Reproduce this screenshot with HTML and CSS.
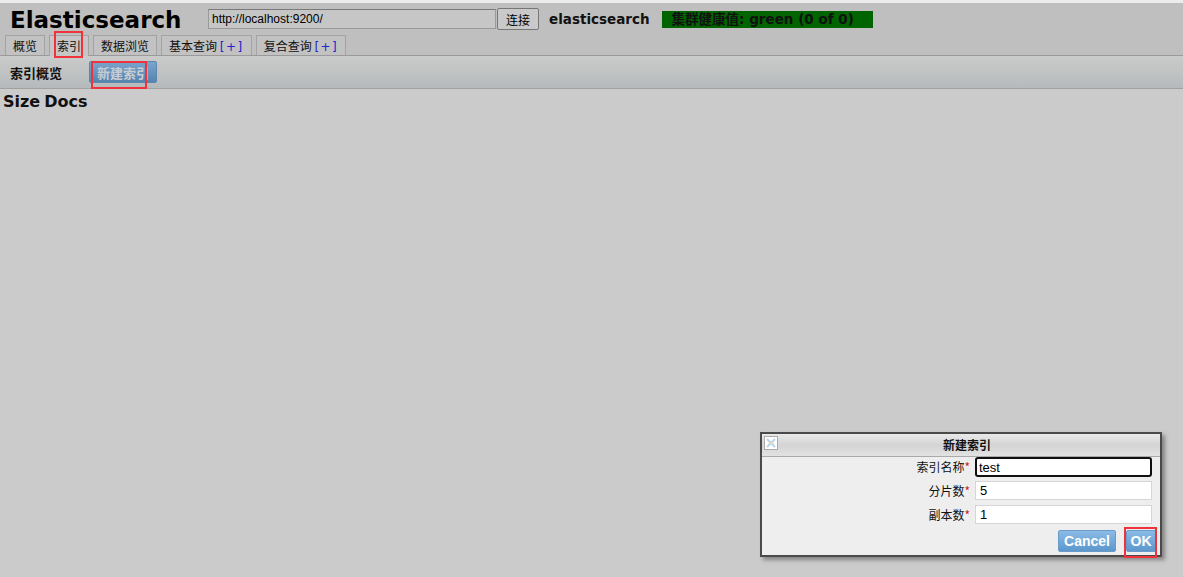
FILE: index.html
```html
<!DOCTYPE html>
<html>
<head>
<meta charset="utf-8">
<link rel="stylesheet" href="styles.css">
</head>
<body>
<div class="header">
  <div class="topbar">
    <h1 class="title">Elasticsearch</h1>
    <input class="url" type="text" value="http://localhost:9200/">
    <button class="connect">连接</button>
    <span class="cluster">elasticsearch</span>
    <span class="health">集群健康值: green (0 of 0)</span>
  </div>
  <div class="tabs">
    <div class="tab">概览</div>
    <div class="tab active">索引</div>
    <div class="tab">数据浏览</div>
    <div class="tab">基本查询 <span class="plus">[+]</span></div>
    <div class="tab">复合查询 <span class="plus">[+]</span></div>
  </div>
</div>
<div class="toolbar">
  <span class="tb-title">索引概览</span>
  <button class="newbtn">新建索引</button>
</div>
<div class="content">
  <div class="stats"><span>Size</span><span>Docs</span></div>
</div>

<div class="dialog">
  <div class="dlg-head">
    <span class="close"><svg width="12" height="12" viewBox="0 0 12 12"><path d="M2 2L10 10M10 2L2 10" stroke="#b9d4ec" stroke-width="2"/><path d="M3 6h6" stroke="#f3e2b0" stroke-width="1"/></svg></span>
    <span class="dlg-title">新建索引</span>
  </div>
  <div class="dlg-body">
    <div class="row"><label>索引名称<i>*</i></label><input class="focus" type="text" value="test"></div>
    <div class="row"><label>分片数<i>*</i></label><input type="text" value="5"></div>
    <div class="row"><label>副本数<i>*</i></label><input type="text" value="1"></div>
    <div class="btns">
      <button class="ui-btn cancel">Cancel</button>
      <button class="ui-btn ok">OK</button>
    </div>
  </div>
</div>

<div class="mark mark-tab"></div>
<div class="mark mark-new"></div>
<div class="mark mark-ok"></div>
</body>
</html>
```

FILE: styles.css
```css
html, body {
  margin: 0;
  padding: 0;
}
body {
  background: #cbcbcb;
  border-top: 3px solid #ececec;
  font-family: "DejaVu Sans", "Noto Sans CJK SC", sans-serif;
  width: 1183px;
  height: 574px;
  overflow: hidden;
  position: relative;
}
.header {
  background: #bfbfbf;
  border-bottom: 1px solid #9a9a9a;
  height: 52px;
  display: flex;
  flex-direction: column;
}
.topbar {
  height: 32px;
  display: flex;
  align-items: center;
}
.title {
  margin: 0 0 0 10px;
  font-size: 23px;
  font-weight: bold;
  color: #000;
  width: 198px;
  line-height: 32px;
  position: relative;
  top: 1px;
}
.url {
  box-sizing: border-box;
  width: 288px;
  height: 20px;
  margin: 0;
  border: 1px solid #9a9a9a;
  border-top-color: #7a7a7a;
  background: #c6c6c6;
  font-family: "Liberation Sans", sans-serif;
  font-size: 12px;
  padding: 0 3px;
  color: #000;
}
.connect {
  box-sizing: border-box;
  height: 22px;
  width: 42px;
  margin: 0 0 0 1px;
  padding: 0;
  border: 1px solid #777;
  border-radius: 2px;
  background: #c9c9c9;
  font-family: "Noto Sans CJK SC", sans-serif;
  font-size: 12px;
  color: #000;
}
.cluster {
  margin-left: 10px;
  font-weight: bold;
  font-size: 13.5px;
  color: #111;
}
.health {
  margin-left: 12px;
  background: #006400;
  color: #111;
  font-weight: bold;
  font-size: 13.5px;
  height: 17px;
  line-height: 17px;
  width: 211px;
  box-sizing: border-box;
  padding-left: 10px;
}
.tabs {
  display: flex;
  align-items: flex-end;
  height: 20px;
  padding-left: 5px;
  gap: 4px;
}
.tab {
  box-sizing: border-box;
  height: 20px;
  border: 1px solid #a3a3a3;
  border-bottom: none;
  padding: 0 7px;
  font-family: "Noto Sans CJK SC", sans-serif;
  font-size: 12px;
  line-height: 20px;
  color: #111;
  background: #c2c2c2;
  white-space: nowrap;
}
.tab.active {
  background: #c6c6c6;
  height: 21px;
  margin-bottom: -1px;
  position: relative;
}
.plus {
  color: #2222cc;
  font-family: "DejaVu Sans", sans-serif;
  font-size: 12px;
  letter-spacing: 1.5px;
}
.toolbar {
  height: 33px;
  box-sizing: border-box;
  background: linear-gradient(#cacbca, #b6babd);
  border-bottom: 1px solid #a0a0a0;
  display: flex;
  align-items: center;
  padding-left: 10px;
}
.tb-title {
  font-family: "Noto Sans CJK SC", sans-serif;
  font-weight: bold;
  font-size: 13px;
  color: #111;
  position: relative;
  top: 0px;
}
.newbtn {
  margin-left: 27px;
  box-sizing: border-box;
  width: 68px;
  height: 22px;
  padding: 0;
  border: 1px solid #5a86b0;
  border-radius: 2px;
  background: linear-gradient(#7aa4cc, #5684ae);
  color: #c9cdd2;
  font-family: "Noto Sans CJK SC", sans-serif;
  font-weight: bold;
  font-size: 13px;
}
.content {
  padding: 2px 3px;
}
.stats {
  display: flex;
  gap: 4px;
  font-weight: bold;
  font-size: 16px;
  color: #111;
  line-height: 22px;
}
.dialog {
  position: absolute;
  left: 760px;
  top: 429px;
  width: 402px;
  height: 125px;
  box-sizing: border-box;
  border: 2px solid #4a4a4a;
  background: #eeeeee;
  box-shadow: 3px 3px 4px rgba(0,0,0,0.35);
}
.dlg-head {
  height: 23px;
  box-sizing: border-box;
  border-bottom: 1px solid #aaa;
  background: linear-gradient(#e9e9e9, #d4d4d4 50%, #e2e2e2);
  display: flex;
  align-items: center;
  justify-content: center;
  position: relative;
}
.close {
  position: absolute;
  left: 2px;
  top: 2px;
  width: 14px;
  height: 14px;
  box-sizing: border-box;
  border: 1px solid #aaa;
  background: #fff;
  display: flex;
  align-items: center;
  justify-content: center;
}
.dlg-title {
  font-family: "Noto Sans CJK SC", sans-serif;
  font-weight: bold;
  font-size: 12px;
  color: #111;
  position: relative;
  top: -1px;
  left: 6px;
}
.row {
  display: flex;
  align-items: flex-start;
  height: 24px;
}
.row label {
  width: 208px;
  text-align: right;
  font-family: "Noto Sans CJK SC", sans-serif;
  font-size: 12px;
  line-height: 19px;
  color: #111;
  padding-right: 5px;
}
.row label i {
  font-style: normal;
  color: #c22;
}
.row input {
  box-sizing: border-box;
  width: 177px;
  height: 19px;
  margin: 0;
  border: 1px solid #d6d6d6;
  background: #fff;
  font-family: "Liberation Sans", sans-serif;
  font-size: 13px;
  padding: 0 4px;
  color: #000;
}
.row input.focus {
  border: 2px solid #111;
  border-radius: 3px;
  height: 20px;
  padding: 0 2px;
}
.btns {
  display: flex;
  justify-content: flex-end;
  padding: 1px 4px 0 0;
  gap: 10px;
}
.ui-btn {
  box-sizing: border-box;
  height: 22px;
  padding: 0;
  border: 1px solid #6a9ac8;
  border-radius: 2px;
  background: linear-gradient(#8bbbe6, #5c97cc);
  color: #fff;
  font-family: "Liberation Sans", sans-serif;
  font-weight: bold;
  font-size: 14px;
}
.cancel { width: 58px; }
.ok { width: 30px; }
.mark {
  position: absolute;
  border: 2px solid #f0323c;
  box-sizing: border-box;
}
.mark-tab { left: 54px; top: 28px; width: 29px; height: 27px; }
.mark-new { left: 91px; top: 58px; width: 56px; height: 28px; }
.mark-ok { left: 1124px; top: 524px; width: 33px; height: 31px; }
```
